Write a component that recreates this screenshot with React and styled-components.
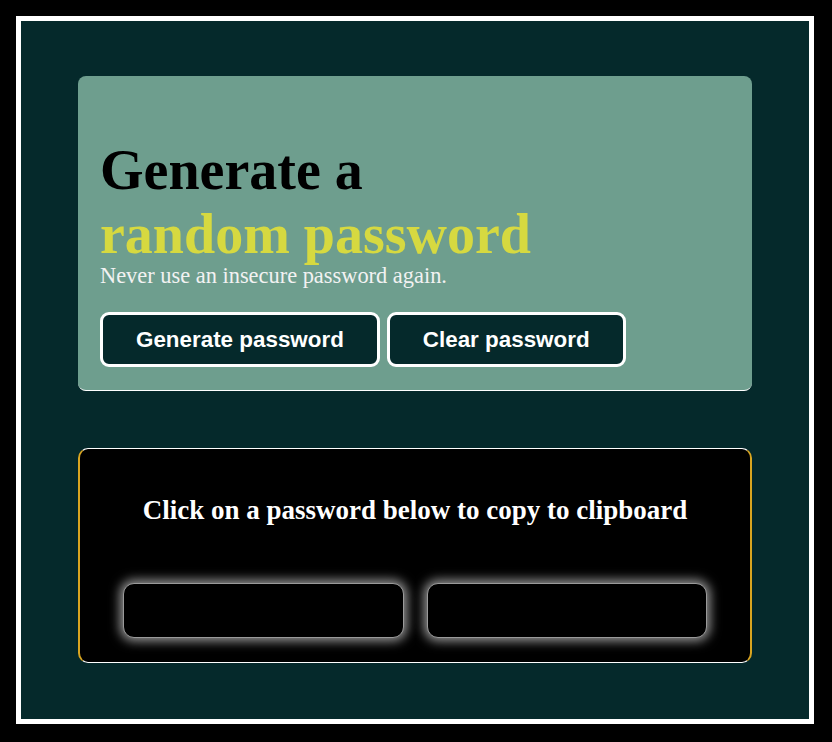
import React from "react";
import styled, { createGlobalStyle } from "styled-components";

const Global = createGlobalStyle`
  html, body {
    margin: 0;
    padding: 0;
    background: #000;
  }
  body {
    padding: 16px 18px 19px 16px;
    font-family: "Liberation Serif", "Times New Roman", serif;
  }
  * { box-sizing: border-box; }
`;

const Frame = styled.main`
  border: 5px solid #fff;
  background: #05292b;
  padding: 55px 57px 56px;
  display: flex;
  flex-direction: column;
  gap: 57px;
`;

const HeroCard = styled.section`
  background: #6e9e8e;
  border-radius: 8px;
  border-bottom: 1.5px solid #fff;
  padding: 22px 22px 23px;
`;

const Title = styled.h1`
  margin: 40px 0 0;
  font-family: "Liberation Serif", "Times New Roman", serif;
  font-weight: bold;
  font-size: 56px;
  line-height: normal;
  color: #000;
`;

const Accent = styled.span`
  display: block;
  color: #d6d940;
`;

const Subtitle = styled.p`
  margin: -3px 0 0;
  font-size: 22.4px;
  line-height: normal;
  color: #f2f2f2;
`;

const Actions = styled.div`
  display: flex;
  gap: 7px;
  margin-top: 23px;
`;

const ActionButton = styled.button`
  background: #05292b;
  color: #fff;
  border: 3px solid #fff;
  border-radius: 9px;
  padding: 11px 33px;
  font-family: "Liberation Sans", Arial, sans-serif;
  font-weight: bold;
  font-size: 22.4px;
  line-height: 27px;
  cursor: pointer;
`;

const OutputCard = styled.section`
  background: #000;
  border-style: solid;
  border-width: 1.5px 2px;
  border-color: #fff #daa520;
  border-radius: 10px;
  padding: 46px 43px 24px;
`;

const OutputTitle = styled.h2`
  margin: 0;
  text-align: center;
  color: #fff;
  font-family: "Liberation Serif", "Times New Roman", serif;
  font-weight: bold;
  font-size: 27px;
  line-height: normal;
`;

const PasswordRow = styled.div`
  display: grid;
  grid-template-columns: 1fr 1fr;
  gap: 23px;
  margin-top: 57px;
`;

const PasswordBox = styled.div`
  height: 55px;
  background: #000;
  border: 1.5px solid #9a9a9a;
  border-radius: 11px;
  box-shadow: 0 0 11px 3px rgba(255, 255, 255, 0.6);
  color: #fff;
  font-family: "Liberation Mono", monospace;
  cursor: pointer;
`;

export default function App() {
  return (
    <>
      <Global />
      <Frame>
        <HeroCard>
          <Title>
            Generate a
            <Accent>random password</Accent>
          </Title>
          <Subtitle>Never use an insecure password again.</Subtitle>
          <Actions>
            <ActionButton>Generate password</ActionButton>
            <ActionButton>Clear password</ActionButton>
          </Actions>
        </HeroCard>
        <OutputCard>
          <OutputTitle>Click on a password below to copy to clipboard</OutputTitle>
          <PasswordRow>
            <PasswordBox />
            <PasswordBox />
          </PasswordRow>
        </OutputCard>
      </Frame>
    </>
  );
}
